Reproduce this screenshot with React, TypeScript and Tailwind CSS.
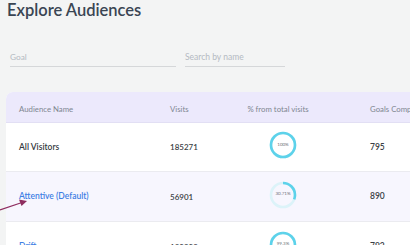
import React from "react";

function Ring({ pct, label }: { pct: number; label: string }) {
  const r = 12;
  const c = 2 * Math.PI * r;
  return (
    <div className="relative w-[28px] h-[28px]">
      <svg width="28" height="28" viewBox="0 0 28 28" className="absolute inset-0">
        <circle cx="14" cy="14" r={r} fill="none" stroke="#dcf3f9" strokeWidth="2.6" />
        <circle
          cx="14"
          cy="14"
          r={r}
          fill="none"
          stroke="#5dd2ea"
          strokeWidth="2.6"
          strokeDasharray={`${(c * pct) / 100} ${c}`}
          transform="rotate(-90 14 14)"
        />
      </svg>
      <div className="absolute inset-0 flex items-center justify-center text-[4.5px] text-[#6b6f75]">
        {label}
      </div>
    </div>
  );
}

const rows = [
  { name: "All Visitors", link: false, visits: "185271", pct: 100, label: "100%", goals: "795", bg: "bg-white", h: "h-[49px]" },
  { name: "Attentive (Default)", link: true, visits: "56901", pct: 30.71, label: "30.71%", goals: "890", bg: "bg-[#f7f6fe]", h: "h-[50px]" },
  { name: "Drift", link: true, visits: "183939", pct: 99.3, label: "99.3%", goals: "792", bg: "bg-white", h: "h-[50px]" },
];

export default function App() {
  return (
    <div
      className="w-[410px] h-[245px] overflow-hidden bg-[#f3f4f4] relative"
      style={{ fontFamily: "Lato, 'Open Sans', sans-serif" }}
    >
      <div className="pl-[7px] h-[20px] text-[16.5px] leading-[20px] font-semibold text-[#3a4553] pt-[0px]">
        Explore Audiences
      </div>
      <div className="flex pl-[10px] mt-[32px] gap-[9px]">
        <div className="w-[166px] border-b-[1.5px] border-[#d5d7d9] text-[8.3px] text-[#b3bac2] pb-[4px] leading-[10px]">
          Goal
        </div>
        <div className="w-[100px] border-b-[1.5px] border-[#d5d7d9] text-[8.5px] text-[#b3bac2] pb-[4px] leading-[10px]">
          Search by name
        </div>
      </div>
      <div className="ml-[6px] mt-[25px] w-[480px] rounded-tl-[7px] overflow-hidden bg-white">
        <div className="flex items-center h-[31px] pt-[5px] bg-[#ece9fc] border-b border-[#e2dff4] text-[7.8px] text-[#7f8791] pl-[13px]">
          <div className="w-[151px] shrink-0">Audience Name</div>
          <div className="w-[73px] shrink-0">Visits</div>
          <div className="w-[80px] shrink-0 text-center pr-[10px] whitespace-nowrap">% from total visits</div>
          <div className="w-[47px] shrink-0" />
          <div className="whitespace-nowrap shrink-0">Goals Completed</div>
        </div>
        {rows.map((r, i) => (
          <div
            key={i}
            className={`flex items-center ${r.h} ${r.bg} border-b border-[#ebebf0] pl-[13px] text-[8.5px]`}
          >
            <div className={`w-[151px] shrink-0 font-semibold ${r.link ? "text-[#3f7fe4]" : "text-[#353a40]"}`}>
              {r.name}
            </div>
            <div className="w-[73px] shrink-0 text-[8px] font-semibold text-[#3b3f45]">{r.visits}</div>
            <div className="w-[80px] shrink-0 flex justify-center -mt-[4px]">
              <Ring pct={r.pct} label={r.label} />
            </div>
            <div className="w-[47px] shrink-0" />
            <div className="font-semibold text-[#3b3f45]">{r.goals}</div>
          </div>
        ))}
      </div>
      <svg className="absolute left-0 top-[196px]" width="32" height="20" viewBox="0 0 32 20">
        <line x1="0" y1="14" x2="22" y2="6.5" stroke="#8e2d5f" strokeWidth="1.3" />
        <polygon points="27,5 19,3.5 21.5,10" fill="#8e2d5f" />
      </svg>
    </div>
  );
}
